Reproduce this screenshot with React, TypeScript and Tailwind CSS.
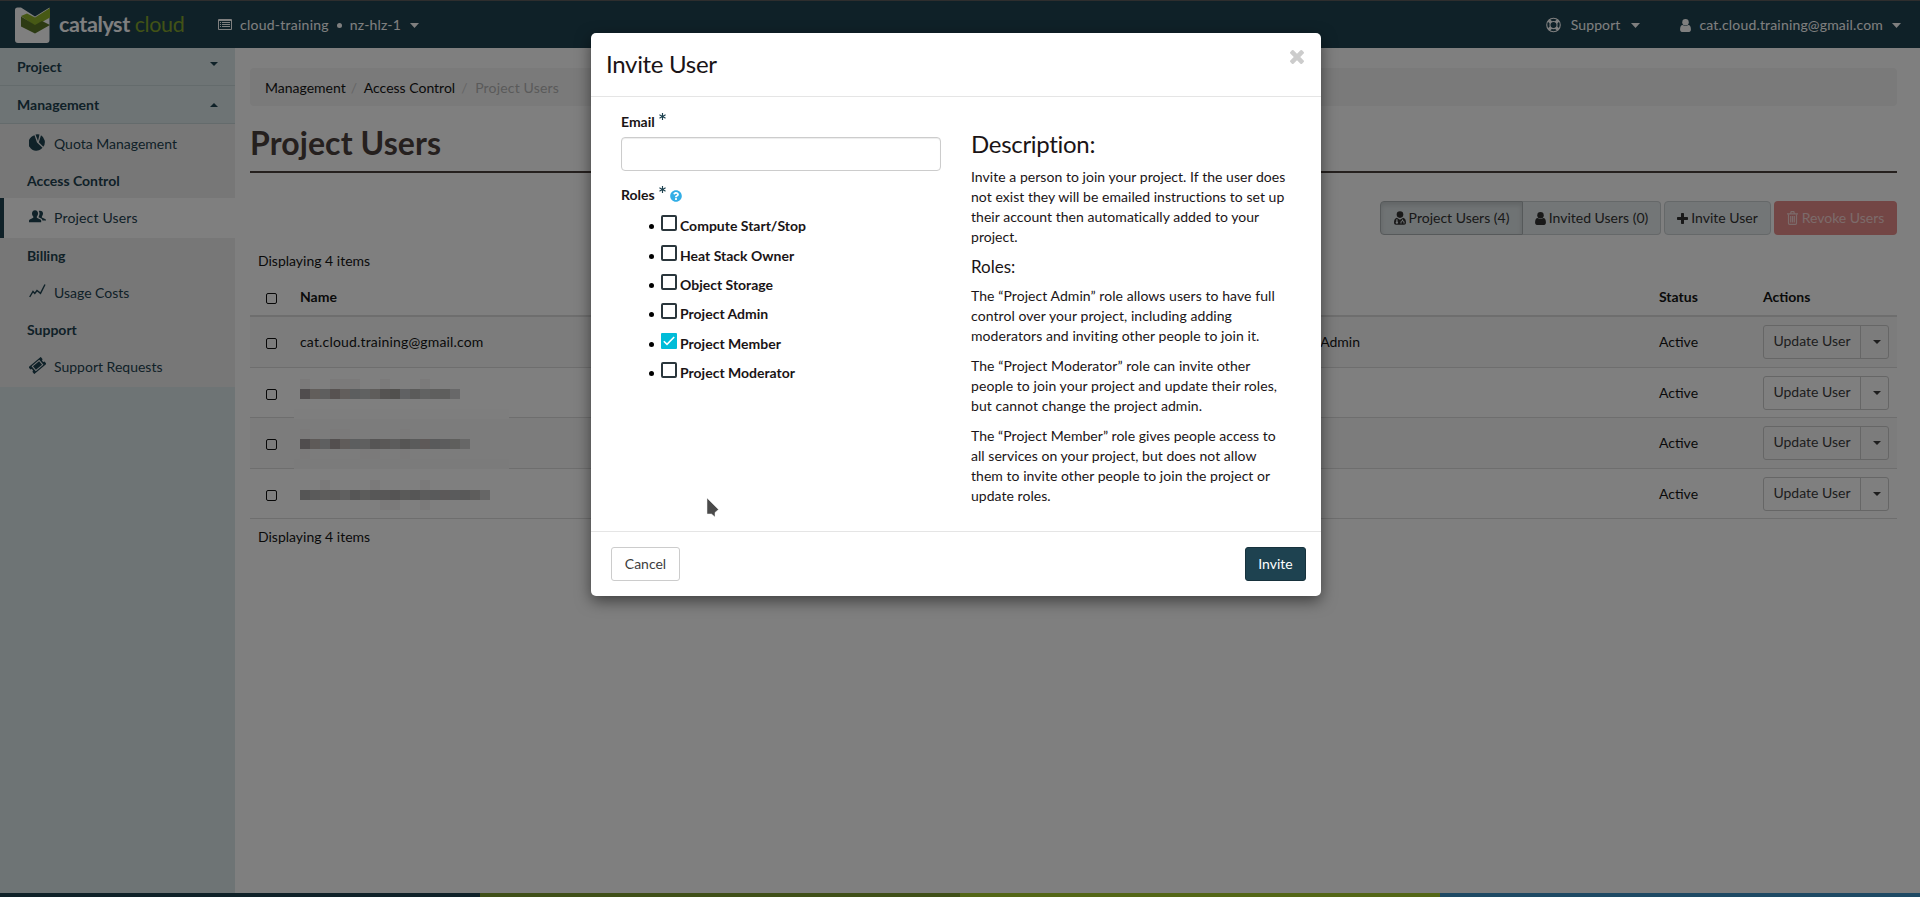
import React from "react";
import { FaAsterisk, FaQuestionCircle } from "react-icons/fa";

function Caret({ className = "" }: { className?: string }) {
  return (
    <svg className={className} width="8" height="4" viewBox="0 0 8 4" fill="currentColor">
      <path d="M0 0h8L4 4z" />
    </svg>
  );
}

function NavCaret({ className = "" }: { className?: string }) {
  return (
    <svg className={className} width="9" height="5" viewBox="0 0 9 5" fill="currentColor">
      <path d="M0 0h9L4.500 5z" />
    </svg>
  );
}

function UserGlyph({ className = "" }: { className?: string }) {
  return (
    <svg className={className} viewBox="256 128 1280 1536" fill="currentColor">
      <path d="M1536 1399q0 109-62.500 187t-150.500 78h-854q-88 0-150.500-78t-62.500-187q0-85 8.500-160.500t31.500-152 58.500-131 94-89 134.500-34.500q131 128 313 128t313-128q76 0 134.500 34.500t94 89 58.500 131 31.500 152 8.500 160.500z" />
      <circle cx="896" cy="512" r="384" />
    </svg>
  );
}

function CloseGlyph({ className = "" }: { className?: string }) {
  return (
    <svg className={className} viewBox="302 366 1188 1188" fill="currentColor">
      <path d="M1490 1322q0 40-28 68l-136 136q-28 28-68 28t-68-28l-294-294-294 294q-28 28-68 28t-68-28l-136-136q-28-28-28-68t28-68l294-294-294-294q-28-28-28-68t28-68l136-136q28-28 68-28t68 28l294 294 294-294q28-28 68-28t68 28l136 136q28 28 28 68t-28 68l-294 294 294 294q28 28 28 68z" />
    </svg>
  );
}

function PlusGlyph() {
  return (
    <svg width="11" height="11" viewBox="0 0 11 11" fill="currentColor">
      <path d="M4.700 0h1.600a.7.7 0 0 1 .7.7V4h3.300a.7.7 0 0 1 .7.7v1.600a.7.7 0 0 1-.7.7H7v3.300a.7.7 0 0 1-.7.7H4.700a.7.7 0 0 1-.7-.7V7H.7a.7.7 0 0 1-.7-.7V4.700A.7.7 0 0 1 .7 4H4V.7a.7.7 0 0 1 .7-.7z" />
    </svg>
  );
}

function ListIcon() {
  return (
    <svg width="14" height="12" viewBox="0 0 14 12" fill="currentColor">
      <path
        fillRule="evenodd"
        d="M1 0h12a1 1 0 0 1 1 1v9a1 1 0 0 1-1 1H1a1 1 0 0 1-1-1V1a1 1 0 0 1 1-1zM1 2V10h12V2z"
      />
      <path d="M2 3h1v1H2zM4 3h8v1H4zM2 5h1v1H2zM4 5h8v1H4zM2 7h1v1H2zM4 7h8v1H4z" />
    </svg>
  );
}

function LifeRing() {
  return (
    <svg width="15" height="16" viewBox="0 0 16 16" fill="none" stroke="currentColor">
      <circle cx="8" cy="8" r="7.200" strokeWidth="1.200" />
      <circle cx="8" cy="8" r="3.800" strokeWidth="1.200" />
      <path d="M3 3l2.500 2.500M13 3l-2.500 2.500M3 13l2.500-2.500M13 13l-2.500-2.500" strokeWidth="3.400" />
    </svg>
  );
}

function Logo() {
  return (
    <svg width="36" height="36" viewBox="0 0 36 36">
      <path d="M3.500.5H7l14 9L35.500.5V33a3 3 0 0 1-3 3H4a3 3 0 0 1-3-3V3A2.500 2.500 0 0 1 3.500.5z" fill="#ffffff" />
      <path d="M7 9l6-2.500 8 4L36 1v9.500L21 19z" fill="#8fb32b" />
      <path d="M7 9.500L21 18l7-4 8 4-15 8.500-14-7z" fill="#5a7626" />
    </svg>
  );
}

function PieIcon() {
  return (
    <svg width="17" height="17" viewBox="0 0 17 17" fill="currentColor">
      <path d="M5.500 1.200L8 8.500l5.500 5.300A7.900 7.900 0 1 1 5.500 1.200z" />
      <path d="M6.500.6A8 8 0 0 1 10.500.5L9 7z" />
      <path d="M12 1.200a8 8 0 0 1 2.300 11.600L9.800 8.300z" />
    </svg>
  );
}

function UsersIcon() {
  return (
    <svg width="17" height="13" viewBox="0 0 17 13" fill="currentColor">
      <path d="M6 .3c2 0 3 1.300 3 3.200 0 1.300-.6 2.400-1.200 3v1.200l3.600 1.700c.6.300.8.700.8 1.300v1.600H0v-1.600c0-.6.300-1 .8-1.300l3.500-1.700V6.500C3.600 5.900 3 4.800 3 3.500 3 1.600 4 .3 6 .3z" />
      <path d="M11 .8c2 0 3 1.100 3 2.800 0 1.200-.5 2.200-1.100 2.800v1l3.200 1.500c.6.300.9.600.9 1.100v.6h-3.600c-.1-1-.5-1.600-1.300-2L9.500 7.300v-.4c.6-.8 1-2 1-3.300 0-1-.3-1.900-.7-2.600.3-.1.700-.2 1.200-.2z" />
    </svg>
  );
}

function ChartIcon() {
  return (
    <svg width="17" height="14" viewBox="0 0 17 14" fill="none" stroke="currentColor" strokeWidth="1.400">
      <path d="M.7 13L4 7.500 5.800 9.500 8 6.500l3.500 2.800L16 .5" />
    </svg>
  );
}

function TicketIcon() {
  return (
    <svg width="17" height="17" viewBox="0 0 17 17">
      <g transform="rotate(-40 8.500 8.500)">
        <path d="M.5 4h16v3a1.500 1.500 0 0 0 0 3v3H.5v-3a1.500 1.500 0 0 0 0-3z" fill="currentColor" />
        <path d="M4 5.700h9v5.600H4z" fill="none" stroke="#ededed" strokeWidth="1" />
      </g>
    </svg>
  );
}

function UserMd() {
  return (
    <svg width="12" height="14" viewBox="0 0 12 14" fill="currentColor">
      <circle cx="6" cy="3.600" r="3.300" />
      <path
        fillRule="evenodd"
        d="M2.800 6.700l3.200 2 3.200-2C11.300 7.200 12 9.500 12 11.500c0 1.500-.8 2.200-2 2.200H2c-1.200 0-2-.7-2-2.200C0 9.500.7 7.200 2.800 6.700zM2.300 8.200v2.300a1.200 1.200 0 1 0 1.200 0V8.200zM8 8.500v1c-.9.200-1.500.9-1.500 1.800v1.200h1v-1.200c0-.6.400-1 1-1s1 .4 1 1v1.200h1v-1.200c0-.9-.6-1.600-1.500-1.800v-1z"
      />
    </svg>
  );
}

function Trash() {
  return (
    <svg width="11" height="14" viewBox="0 0 11 14" fill="none" stroke="currentColor">
      <path d="M0 2.900h11M3.500 2.800L4.200.7h2.600l.7 2.100" strokeWidth="1.200" />
      <path d="M1.500 3.300v9c0 .6.400 1 1 1h6c.6 0 1-.4 1-1v-9M3.700 5v6.500M5.500 5v6.500M7.300 5v6.500" strokeWidth="1.200" />
    </svg>
  );
}

function Box({ className = "" }: { className?: string }) {
  return <span className={`block h-[11px] w-[11px] rounded-[2px] border border-[#111] ${className}`} />;
}

function Header() {
  return (
    <header className="flex h-12 shrink-0 items-center border-t border-[#5c5c5c] bg-[#1e4250] text-white">
      <div className="ml-[14px] flex items-center pt-px">
        <Logo />
        <div className="ml-[9px] flex w-[126px] items-baseline gap-[5px] pb-0.5 text-[21.500px] leading-8 tracking-[-0.4px]">
          <span className="font-bold">catalyst</span>
          <span className="text-[#84a52c]">cloud</span>
        </div>
      </div>
      <div className="ml-[33px] flex items-center pt-px">
        <ListIcon />
        <span className="ml-2 tracking-[0.25px]">cloud-training</span>
        <span className="mx-2 block h-[5px] w-[5px] rounded-full bg-white" />
        <span className="tracking-[0.15px]">nz-hlz-1</span>
        <NavCaret className="ml-[9px]" />
      </div>
      <div className="ml-auto mr-[19px] flex items-center pt-px">
        <LifeRing />
        <span className="ml-[10px] tracking-[0.1px]">Support</span>
        <NavCaret className="ml-[11px]" />
        <UserGlyph className="ml-10 h-[13px] w-[11px]" />
        <span className="ml-2 tracking-[0.17px]">cat.cloud.training@gmail.com</span>
        <NavCaret className="ml-[9px]" />
      </div>
    </header>
  );
}

function SideItem({ icon, label, active }: { icon: React.ReactNode; label: string; active?: boolean }) {
  return (
    <div
      className={
        active
          ? "flex h-10 items-center border-l-4 border-[#1e4250] bg-white pl-[25px] tracking-[0.17px]"
          : "flex h-10 items-center pl-[29px]"
      }
    >
      <span className="flex w-[25px] pb-1">{icon}</span>
      <span>{label}</span>
    </div>
  );
}

function Sidebar() {
  return (
    <aside className="w-[235px] shrink-0 bg-[#dde8ea] text-[#1e4250]">
      <div className="flex h-[38px] items-center justify-between border-b border-[#c8d6d8] pl-[17px] pr-[17px] font-bold">
        <span>Project</span>
        <Caret className="mb-[6px]" />
      </div>
      <div className="flex h-[38px] items-center justify-between border-b border-[#c8d6d8] pl-[17px] pr-[17px] font-bold">
        <span>Management</span>
        <Caret className="rotate-180" />
      </div>
      <div className="h-[263px] bg-[#efefef]">
        <SideItem icon={<PieIcon />} label="Quota Management" />
        <div className="flex h-[34px] items-center pl-[27px] font-bold">Access Control</div>
        <SideItem icon={<UsersIcon />} label="Project Users" active />
        <div className="flex h-[35px] items-center pl-[27px] font-bold">Billing</div>
        <SideItem icon={<ChartIcon />} label="Usage Costs" />
        <div className="flex h-[34px] items-center pl-[27px] font-bold">Support</div>
        <SideItem icon={<TicketIcon />} label="Support Requests" />
      </div>
    </aside>
  );
}

const ramps = [
  ["#a09b9c", "#c4bcb7", "#bdbdbd", "#aea4a2", "#c4bcb9", "#b8bcbf", "#c0c2c2", "#bfbab7", "#aaa7a5", "#a3a09d", "#c0c2c6", "#b6b6b5", "#c2c4c4", "#bfbfbd", "#bcbcbb", "#d0d0d2"],
  ["#a09b9c", "#bcb4b0", "#bcbec0", "#a79f9e", "#c0b9b5", "#b8bcbf", "#bebfbf", "#acabab", "#b4b1af", "#b8b8b8", "#acaaa8", "#b5b7b7", "#bcb3b1", "#b2b4b7", "#b8b9bb", "#bebebb", "#cfcfcf"],
  ["#aaaaaa", "#b5b4b4", "#bcbbb9", "#b8b6b5", "#c1c1c1", "#acacac", "#b8b8b7", "#aeaeae", "#b0afae", "#aaa9a9", "#b5b4b3", "#acacac", "#b9b9b8", "#b3b5b6", "#b8b3b2", "#b5b6b9", "#b2b2b2", "#bdbbb9", "#cccccc"],
];

const faint = [
  { top: [0, 3, 4, 5, 8, 12], bottom: [] as number[] },
  { top: [0, 3, 4, 10], bottom: [0, 6, 7, 10] },
  { top: [2, 7, 12], bottom: [8, 9, 12] },
];

function FaintRow({ count, marks }: { count: number; marks: number[] }) {
  return (
    <div className="flex">
      {Array.from({ length: count }, (_, i) => (
        <span key={i} className={marks.includes(i) ? "h-[10px] w-[10px] bg-[#f6f5f5]" : "h-[10px] w-[10px]"} />
      ))}
    </div>
  );
}

function Redacted({ index }: { index: number }) {
  const colors = ramps[index];
  return (
    <div className="flex flex-col pt-0.5">
      <FaintRow count={colors.length} marks={faint[index].top} />
      <div className="flex">
        {colors.map((c, i) => (
          <span key={i} className="h-[10px] w-[10px]" style={{ backgroundColor: c }} />
        ))}
      </div>
      <FaintRow count={colors.length} marks={faint[index].bottom} />
    </div>
  );
}

function UpdateButton() {
  return (
    <div className="flex h-[34px] w-[126px] rounded-[3px] border border-[#ccc] text-[#3d3d3d]">
      <span className="flex w-[97px] items-center justify-center border-r border-[#ccc] pb-0.5">Update User</span>
      <span className="flex flex-1 items-center justify-center">
        <Caret className="ml-1" />
      </span>
    </div>
  );
}

function Row({ index }: { index: number }) {
  const shade = index % 2 === 0 ? "bg-[#f9f9f9]" : "";
  const height = index % 2 === 0 ? "h-[51px]" : "h-[50px]";
  return (
    <div className={`relative flex items-center border-b border-[#ddd] ${height} ${shade}`}>
      <Box className="ml-4 mt-[3px]" />
      <div className="ml-[23px] w-[930px] tracking-[0.17px]">
        {index === 0 ? "cat.cloud.training@gmail.com" : <Redacted index={index - 1} />}
      </div>
      {index === 2 && (
        <>
          <span className="absolute -top-[9px] left-[44px] h-[10px] w-[215px] bg-[#fcfcfc]" />
          <span className="absolute -bottom-px left-[44px] h-[10px] w-[215px] bg-[#f7f7f7]" />
        </>
      )}
      <div className="w-[429px]">
        {index === 0 && <span className="block w-[130px] text-right">Project Admin</span>}
      </div>
      <div className="w-[104px]">Active</div>
      <UpdateButton />
    </div>
  );
}

function Content() {
  return (
    <main className="flex flex-1 flex-col bg-white pl-[15px] pr-[23px] pt-5 text-[#141414]">
      <div className="flex h-[38px] items-center rounded bg-[#f5f5f5] pl-[15px] pt-px">
        <span>Management</span>
        <span className="w-[18px] pl-[5px] text-[#ccc]">/</span>
        <span>Access Control</span>
        <span className="w-[20px] pl-[6px] text-[#ccc]">/</span>
        <span className="tracking-[0.17px] text-[#b4b4b4]">Project Users</span>
      </div>
      <h1 className="h-[67px] border-b-2 border-[#4b403c] pt-[17px] text-[32px] leading-10 font-bold tracking-[0.1px] text-[#4b403c]">
        Project Users
      </h1>
      <div className="mt-7 flex h-[34px] justify-end text-[#333]">
        <span className="flex w-[143px] items-center justify-center gap-[3px] rounded-l border border-[#adb3b5] bg-[#dfe6e8] shadow-[inset_0_3px_5px_rgba(0,0,0,0.125)]">
          <UserMd />
          Project Users (4)
        </span>
        <span className="flex w-[138px] items-center justify-center gap-[3px] rounded-r border border-l-0 border-[#cbd0d2] bg-[#e6ecee]">
          <UserGlyph className="h-[13px] w-[11px]" />
          Invited Users (0)
        </span>
        <span className="ml-[3px] flex w-[107px] items-center justify-center gap-[3px] rounded border border-[#cbd0d2] bg-[#e6ecee]">
          <PlusGlyph />
          Invite User
        </span>
        <span className="ml-[3px] flex w-[123px] items-center justify-center gap-1 rounded bg-[#e68c8a] text-[#f8d6d5]">
          <Trash />
          Revoke Users
        </span>
      </div>
      <div className="mt-1 flex h-10 items-center pl-2 pt-[3px]">Displaying 4 items</div>
      <div className="flex h-[38px] items-center border-b-2 border-[#ddd] font-bold">
        <Box className="ml-4 mt-[3px]" />
        <span className="ml-[23px] w-[1359px]">Name</span>
        <span className="w-[104px]">Status</span>
        <span>Actions</span>
      </div>
      {[0, 1, 2, 3].map((i) => (
        <Row key={i} index={i} />
      ))}
      <div className="flex h-9 items-center pl-2">Displaying 4 items</div>
    </main>
  );
}

const roles = [
  { name: "Compute Start/Stop", checked: false },
  { name: "Heat Stack Owner", checked: false },
  { name: "Object Storage", checked: false },
  { name: "Project Admin", checked: false },
  { name: "Project Member", checked: true },
  { name: "Project Moderator", checked: false },
];

function RoleItem({ name, checked }: { name: string; checked: boolean }) {
  return (
    <li className="flex h-[29.400px] items-center pl-[28px] font-bold">
      <span className="mt-1 block h-[5px] w-[5px] rounded-full bg-black" />
      {checked ? (
        <span className="mb-[3px] ml-[7px] flex h-4 w-4 items-center justify-center rounded-[1px] bg-[#00bcd8]">
          <svg width="12" height="10" viewBox="0 0 12 10" fill="none" stroke="#fff" strokeWidth="1.600">
            <path d="M.8 5.200L4 8.400 11.200 1" />
          </svg>
        </span>
      ) : (
        <span className="mb-[3px] ml-[7px] h-4 w-4 rounded-[2px] border-2 border-[#2a363c]" />
      )}
      <span className="ml-[3px] mt-[3px]">{name}</span>
    </li>
  );
}

function Modal() {
  return (
    <div
      role="dialog"
      className="absolute left-[591px] top-[33px] flex h-[563px] w-[730px] flex-col rounded-[5px] bg-white text-[#1a1416] shadow-[0_5px_15px_rgba(0,0,0,0.5)]"
    >
      <div className="flex h-16 shrink-0 justify-between border-b border-[#e5e5e5] pl-[15px] pr-[17px]">
        <h2 className="pt-4 text-[24px] leading-[30px] tracking-[-0.3px]">Invite User</h2>
        <CloseGlyph className="mt-[17px] h-[14px] w-[14px] text-[#ccc]" />
      </div>
      <div className="flex h-[435px] shrink-0 border-b border-[#e5e5e5]">
        <div className="w-[350px] pl-[30px] pt-[15px]">
          <div className="flex h-[25px] font-bold">
            <span className="leading-5">Email</span>
            <FaAsterisk className="ml-[4px] mt-[1px] text-[7px] text-[#1e4250]" />
          </div>
          <div className="h-[34px] w-[320px] rounded border border-[#ccc] shadow-[inset_0_1px_1px_rgba(0,0,0,0.075)]" />
          <div className="mt-[14px] flex h-[25px] font-bold">
            <span className="leading-5">Roles</span>
            <FaAsterisk className="ml-1 mt-[1px] text-[7px] text-[#1e4250]" />
            <FaQuestionCircle className="ml-1 mt-[5px] text-[12px] text-[#33aee6]" />
          </div>
          <ul>
            {roles.map((r) => (
              <RoleItem key={r.name} name={r.name} checked={r.checked} />
            ))}
          </ul>
        </div>
        <div className="w-[350px] pl-[30px] pt-8">
          <h3 className="text-[24px] leading-[30px] tracking-[-0.3px]">Description:</h3>
          <p className="mt-2 w-[330px] tracking-[0.04px]">
            Invite a person to join your project. If the user does
            <br />
            not exist they will be emailed instructions to set up
            <br />
            their account then automatically added to your
            <br />
            project.
          </p>
          <h4 className="mt-[10px] text-[17px] leading-5">Roles:</h4>
          <p className="mt-[9px] w-[330px] tracking-[0.07px]">
            The “Project Admin” role allows users to have full
            <br />
            control over your project, including adding
            <br />
            moderators and inviting other people to join it.
          </p>
          <p className="mt-[10px] w-[330px] tracking-[0.07px]">
            The “Project Moderator” role can invite other
            <br />
            people to join your project and update their roles,
            <br />
            but cannot change the project admin.
          </p>
          <p className="mt-[10px] w-[330px] tracking-[0.04px]">
            The “Project Member” role gives people access to
            <br />
            all services on your project, but does not allow
            <br />
            them to invite other people to join the project or
            <br />
            update roles.
          </p>
        </div>
      </div>
      <div className="flex items-start justify-between pl-5 pr-[15px] pt-[15px]">
        <button className="h-[34px] w-[69px] rounded-[3px] border border-[#ccc] text-[#3d3d3d]">Cancel</button>
        <button className="h-[34px] w-[61px] rounded-[3px] border border-[#17323d] bg-[#1e4250] text-white">Invite</button>
      </div>
    </div>
  );
}

function Pointer() {
  return (
    <svg className="absolute left-[705px] top-[496px]" width="16" height="24" viewBox="0 0 16 24">
      <path d="M2 2v16h4.500l3.500 3v-4.500L13.500 13.500z" fill="#4a4a4a" stroke="#f0f0f0" strokeWidth="0.500" />
    </svg>
  );
}

export default function App() {
  return (
    <div className="relative flex h-[897px] w-[1920px] flex-col overflow-hidden bg-white font-['Lato',sans-serif] text-[14px] leading-5 whitespace-nowrap">
      <Header />
      <div className="flex min-h-0 flex-1">
        <Sidebar />
        <Content />
      </div>
      <div className="flex h-1 shrink-0">
        <span className="flex-1 bg-[#1e4250]" />
        <span className="flex-1 bg-[#7f9e30]" />
        <span className="flex-1 bg-[#a6cc2c]" />
        <span className="flex-1 bg-[#3d94c8]" />
      </div>
      <div className="absolute inset-0 bg-black/50" />
      <Modal />
      <Pointer />
    </div>
  );
}
